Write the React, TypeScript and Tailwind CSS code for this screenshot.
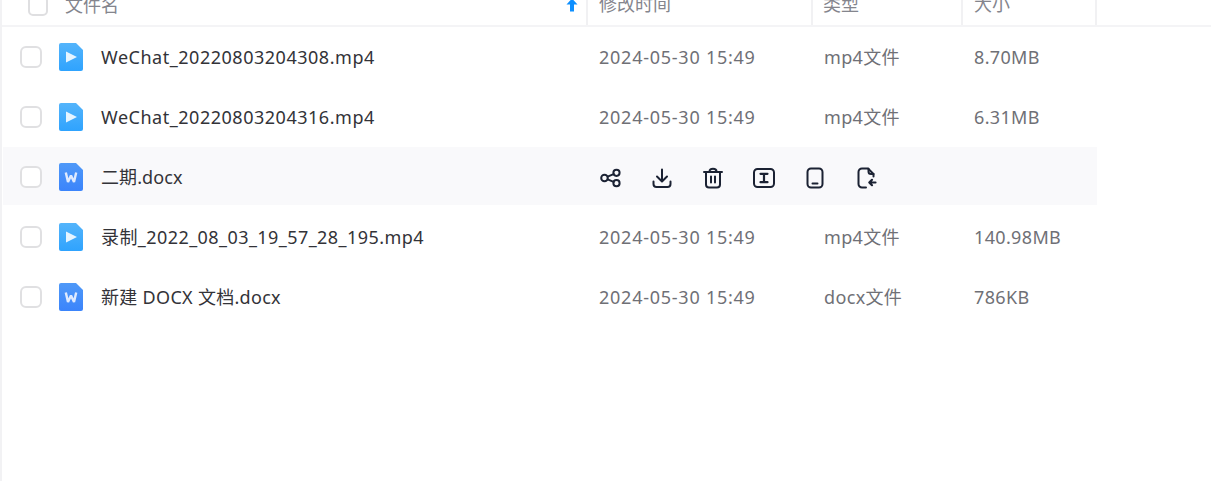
import React from "react";

type FileRow = {
  name: string;
  kind: "video" | "word";
  time: string;
  type: string;
  size: string;
  active?: boolean;
  tracking: string;
};

const files: FileRow[] = [
  { name: "WeChat_20220803204308.mp4", kind: "video", time: "2024-05-30 15:49", type: "mp4文件", size: "8.70MB", tracking: "tracking-[0.52px]" },
  { name: "WeChat_20220803204316.mp4", kind: "video", time: "2024-05-30 15:49", type: "mp4文件", size: "6.31MB", tracking: "tracking-[0.52px]" },
  { name: "二期.docx", kind: "word", time: "", type: "", size: "", active: true, tracking: "tracking-[0.1px]" },
  { name: "录制_2022_08_03_19_57_28_195.mp4", kind: "video", time: "2024-05-30 15:49", type: "mp4文件", size: "140.98MB", tracking: "tracking-[0.43px]" },
  { name: "新建 DOCX 文档.docx", kind: "word", time: "2024-05-30 15:49", type: "docx文件", size: "786KB", tracking: "tracking-[0.3px]" },
];

function FileIcon({ kind }: { kind: "video" | "word" }) {
  const id = kind === "video" ? "video-grad" : "word-grad";
  return (
    <svg width="24" height="28" viewBox="0 0 24 28" className="block shrink-0">
      <defs>
        <linearGradient id={id} x1="0" y1="0" x2="0" y2="1">
          <stop offset="0" stopColor={kind === "video" ? "#54b4fb" : "#4f99f8"} />
          <stop offset="1" stopColor={kind === "video" ? "#2fa3fe" : "#3b84fb"} />
        </linearGradient>
      </defs>
      <path d="M2 0H17L24 7V26a2 2 0 0 1-2 2H2a2 2 0 0 1-2-2V2a2 2 0 0 1 2-2Z" fill={`url(#${id})`} />
      {kind === "video" ? (
        <path d="M7 8.500L18 14L7 19.500Z" fill="#e6f4ff" />
      ) : (
        <path d="M6.800 9.500L9 19L12 12.500L15 19L17.200 9.500" fill="none" stroke="#dfeafe" strokeWidth="2.400" strokeLinejoin="bevel" />
      )}
    </svg>
  );
}

function ActionIcon({ children }: { children: React.ReactNode }) {
  return (
    <svg width="24" height="24" viewBox="0 0 24 24" fill="none" stroke="#1b2233" strokeWidth="2" strokeLinecap="round" strokeLinejoin="round">
      {children}
    </svg>
  );
}

function Actions() {
  return (
    <div className="flex items-center gap-[27px] pt-[2px]">
      <ActionIcon>
        <circle cx="5.500" cy="12" r="3.300" />
        <circle cx="17.500" cy="6.800" r="3.100" />
        <circle cx="17.500" cy="17.200" r="3.100" />
        <path d="M8.600 10.600L14.600 8.100M8.600 13.400L14.600 15.900" />
      </ActionIcon>
      <ActionIcon>
        <path d="M12 3.500V15M7 10.500L12 15.500L17 10.500" />
        <path d="M3.500 15.500V18a3 3 0 0 0 3 3h11a3 3 0 0 0 3-3v-2.500" />
      </ActionIcon>
      <ActionIcon>
        <path d="M3 6H21M8.500 5.500C8.500 3.500 10 2.800 12 2.800s3.500.7 3.500 2.700" />
        <path d="M5 6V18.500a3 3 0 0 0 3 3h8a3 3 0 0 0 3-3V6" />
        <path d="M10 10.500V16.500M14 10.500V16.500" />
      </ActionIcon>
      <ActionIcon>
        <rect x="2" y="3" width="20" height="18" rx="3.500" />
        <path d="M8.500 7.800H15.500M8.500 16.200H15.500M12 7.800V16.200" strokeWidth="2.200" />
      </ActionIcon>
      <ActionIcon>
        <rect x="4.500" y="2.500" width="15" height="19" rx="3.500" />
        <path d="M9.500 17.500H14.500" />
      </ActionIcon>
      <ActionIcon>
        <path d="M19.500 10.500V8L14 2.500H8A3.500 3.500 0 0 0 4.500 6V18A3.500 3.500 0 0 0 8 21.500H12" />
        <path d="M14.500 2.800V5.500A2.500 2.500 0 0 0 17 8H19.500" />
        <path d="M21.500 16.500H15.500M18 13.800L15.300 16.500L18 19.200" strokeWidth="2.200" />
      </ActionIcon>
    </div>
  );
}

const gridCols = "grid w-[1094px] grid-cols-[583px_225px_150px_136px]";

export default function App() {
  return (
    <div
      className="h-[481px] w-[1211px] overflow-hidden border-l-2 border-[#f2f2f4] bg-white text-[18px]"
      style={{ fontFamily: '"Noto Sans", "Noto Sans CJK SC", sans-serif' }}
    >
      {/* Table header, scrolled partly out of view */}
      <div className="h-[27px] overflow-hidden border-b-2 border-[#f4f4f6]">
        <div className={`${gridCols} ml-px mt-[-14px] h-[39px] leading-[37px] text-[#84858d]`}>
          <div className="relative flex items-center pl-[25px]">
            <span className="h-[20px] w-[20px] rounded-[5px] border-2 border-[#dfdfe1]" />
            <span className="ml-[17px]">文件名</span>
            <svg width="12" height="14" viewBox="0 0 12 14" className="absolute right-[8px] top-[12px]">
              <path d="M6 0.500L11.500 6.500H8V13.500H4V6.500H0.500Z" fill="#0d8fff" />
            </svg>
          </div>
          <div className="border-l-2 border-[#f1f1f3] pl-[11px]">修改时间</div>
          <div className="border-l-2 border-[#f1f1f3] pl-[10px]">类型</div>
          <div className="border-x-2 border-[#f1f1f3] pl-[11px]">大小</div>
        </div>
      </div>
      {files.map((f) => (
        <div key={f.name} className="ml-px h-[60px] pb-[2px]">
          <div className={`${gridCols} h-[58px] items-center pt-[2px] ${f.active ? "bg-[#f9f9fb]" : ""}`}>
            <div className="flex items-center pl-[17px] text-[#333338]">
              <span className="h-[22px] w-[22px] rounded-[6px] border-2 border-[#e0e0e2] bg-white" />
              <span className="ml-[17px] mr-[18px]">
                <FileIcon kind={f.kind} />
              </span>
              <span className={f.tracking}>{f.name}</span>
            </div>
            {f.active ? (
              <div className="col-span-3 pl-[13px]">
                <Actions />
              </div>
            ) : (
              <>
                <div className="pl-[13px] tracking-[0.75px] text-[#6f7076]">{f.time}</div>
                <div className="pl-[13px] tracking-[0.35px] text-[#6f7076]">{f.type}</div>
                <div className="pl-[13px] tracking-[0.35px] text-[#6f7076]">{f.size}</div>
              </>
            )}
          </div>
        </div>
      ))}
    </div>
  );
}
